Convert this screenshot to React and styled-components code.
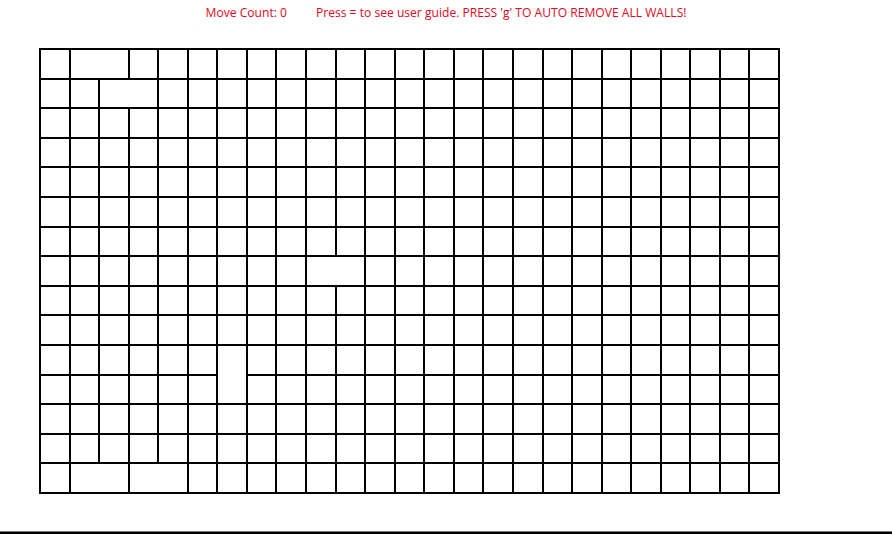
import React from "react";
import styled, { createGlobalStyle } from "styled-components";

const Global = createGlobalStyle`
  html, body { margin: 0; padding: 0; background: #ffffff; }
  body { font-family: "Open Sans", "Liberation Sans", sans-serif; }
`;

const ROWS = 15;
const COLS = 25;

const openRight = new Set(["0,1", "1,2", "7,9", "14,1", "14,3"]);
const openDown = new Set(["10,6"]);

const Page = styled.div`
  min-height: 100vh;
  display: flex;
  flex-direction: column;
  box-sizing: border-box;
`;

const Header = styled.div`
  height: 48px;
  box-sizing: border-box;
  padding: 4px 0 0 0;
  display: flex;
  justify-content: center;
  gap: 29px;
  color: #dc0a1e;
  font-family: "Open Sans", "Liberation Sans", sans-serif;
  font-size: 12.1px;
  line-height: 18px;
`;

const Label = styled.span`
  white-space: pre;
`;

const BoardWrap = styled.div`
  padding-left: 39px;
`;

const Board = styled.div`
  width: 741px;
  height: 446px;
  display: grid;
  grid-template-columns: repeat(${COLS}, 1fr);
  grid-template-rows: repeat(${ROWS}, 1fr);
  box-sizing: border-box;
  border: 1px solid #000;
`;

const wall = (on) => (on ? "1px solid #000" : "none");

const Cell = styled.div`
  box-sizing: border-box;
  border-top: ${(p) => wall(p.$top)};
  border-right: ${(p) => wall(p.$right)};
  border-bottom: ${(p) => wall(p.$bottom)};
  border-left: ${(p) => wall(p.$left)};
`;

const Footer = styled.div`
  margin-top: auto;
  height: 2px;
  background: #000;
  border-top: 1px solid #777;
`;

export default function App() {
  const cells = [];
  for (let r = 0; r < ROWS; r++) {
    for (let c = 0; c < COLS; c++) {
      const right = !openRight.has(`${r},${c}`);
      const left = !(c > 0 && openRight.has(`${r},${c - 1}`));
      const bottom = !openDown.has(`${r},${c}`);
      const top = !(r > 0 && openDown.has(`${r - 1},${c}`));
      cells.push(
        <Cell key={`${r}-${c}`} $top={top} $right={right} $bottom={bottom} $left={left} />
      );
    }
  }
  return (
    <Page>
      <Global />
      <Header>
        <Label>Move Count: 0</Label>
        <Label>Press = to see user guide. PRESS 'g' TO AUTO REMOVE ALL WALLS!</Label>
      </Header>
      <BoardWrap>
        <Board>{cells}</Board>
      </BoardWrap>
      <Footer />
    </Page>
  );
}
